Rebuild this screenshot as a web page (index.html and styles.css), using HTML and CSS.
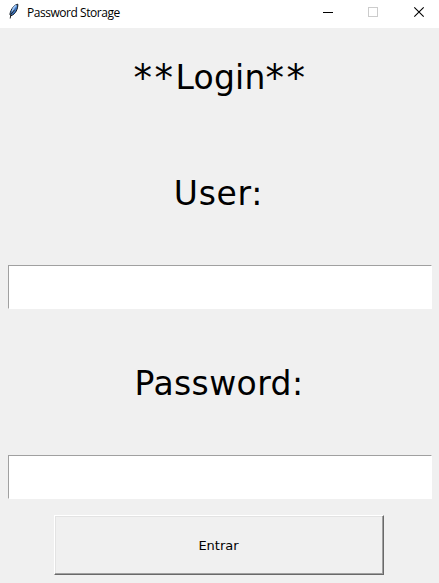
FILE: index.html
```html
<!DOCTYPE html>
<html lang="en">
<head>
<meta charset="utf-8">
<title>Password Storage</title>
<link rel="stylesheet" href="styles.css">
</head>
<body>
<header class="titlebar">
  <svg class="feather" width="16" height="20" viewBox="0 0 16 20">
    <path d="M11.8 4.2C8.5 4.6 4.8 9 3.9 14.3L5 15.8C9.6 14 12 9 11.8 4.2Z" fill="#3c76c4" stroke="#101820" stroke-width="1"/>
    <path d="M10.4 5.5C8.5 6.5 6.8 9 6.2 11.6" fill="none" stroke="#9cc4f4" stroke-width="1.6"/>
    <path d="M8.5 9.8L4.8 14.5L4.2 18.5" fill="none" stroke="#202020" stroke-width="1"/>
  </svg>
  <span class="title">Password Storage</span>
  <div class="controls">
    <svg width="46" height="28" viewBox="0 0 46 28"><path d="M7 12.5H17" stroke="#000"/></svg>
    <svg width="46" height="28" viewBox="0 0 46 28"><rect x="6.5" y="7.5" width="9" height="9" fill="none" stroke="#ccc"/></svg>
    <svg width="31" height="28" viewBox="0 0 31 28"><path d="M6.3 7.3L15.7 16.7M15.7 7.3L6.3 16.7" stroke="#000" stroke-width="1.1"/></svg>
  </div>
</header>
<main class="form">
  <h1 class="heading login"><span class="stars">**</span>Login<span class="stars">**</span></h1>
  <label class="heading user" for="user">User:</label>
  <input class="entry" id="user" type="text">
  <label class="heading password" for="password">Password:</label>
  <input class="entry" id="password" type="password">
  <button class="submit" type="button">Entrar</button>
</main>
</body>
</html>
```
FILE: styles.css
```css
* { box-sizing: border-box; }
body {
  margin: 0;
  height: 583px;
  overflow: hidden;
  background: #f0f0f0;
  color: #000;
  font-family: "DejaVu Sans", sans-serif;
}
.titlebar {
  display: flex;
  height: 28px;
  padding-left: 6px;
  background: #fff;
}
.feather { flex: none; }
.title {
  margin-left: 5px;
  font: 12px/26px "Open Sans", sans-serif;
  letter-spacing: -0.46px;
  white-space: nowrap;
}
.controls { display: flex; margin-left: auto; }
.controls svg { display: block; }
.form {
  display: flex;
  flex-direction: column;
  align-items: center;
}
.heading {
  height: 40px;
  margin: 0;
  font-size: 33px;
  font-weight: 400;
  line-height: 40px;
  letter-spacing: 0.4px;
  white-space: nowrap;
}
.stars {
  font-size: 37px;
  line-height: 0;
  letter-spacing: 2.5px;
  vertical-align: -2px;
}
.login { margin-top: 30px; padding-left: 2px; letter-spacing: 0.2px; }
.user { margin-top: 76px; padding-right: 2px; letter-spacing: 0.7px; }
.password { margin-top: 55px; padding-right: 1px; }
.entry {
  width: 424px;
  height: 44px;
  margin: 51px 0 0;
  padding: 0 4px;
  border: 1px solid #fff;
  border-top-color: #a0a0a0;
  border-left-color: #a0a0a0;
  border-radius: 0;
  outline: 0;
  background: #fff;
  font-size: 24px;
}
.submit {
  width: 330px;
  height: 60px;
  margin: 16px 2px 0 0;
  padding: 0;
  border: 1px solid #696969;
  border-top-color: #fff;
  border-left-color: #fff;
  box-shadow: inset -1px -1px #a0a0a0, inset 1px 1px #e3e3e3;
  background: #f0f0f0;
  color: #000;
  font: 13px "DejaVu Sans", sans-serif;
}
```
